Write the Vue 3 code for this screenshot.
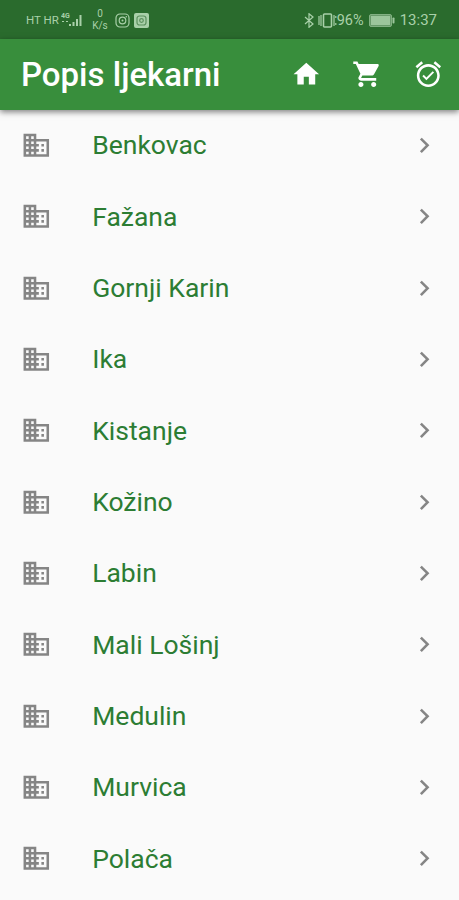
<!-- App.vue - Pharmacy list -->
<template>
  <div class="screen">
    <div class="status-bar">
      <div class="status-left">
        <span class="carrier">HT HR</span>
        <svg class="signal" viewBox="0 0 22 16">
          <text x="0" y="6" class="network">4G</text>
          <path d="M1 9h2v1H1zM5 9h2v1H5zM8 12h2v2H8zM11.5 10h2v4h-2zM15 7h2v7h-2zM18.5 3h2v11h-2z" />
        </svg>
        <div class="speed">
          <span>0</span>
          <span>K/s</span>
        </div>
        <svg class="status-app" viewBox="0 0 15 15">
          <rect x="1" y="1" width="13" height="13" rx="4" class="line" />
          <circle cx="7.5" cy="7.5" r="3.3" class="line" />
          <circle cx="7.5" cy="7.5" r="1" />
          <circle cx="11.3" cy="3.8" r=".8" />
        </svg>
        <svg class="status-app gallery" viewBox="0 0 15 15">
          <rect width="15" height="15" rx="2" />
          <rect x="3" y="3" width="9" height="9" rx="2.5" class="cut" />
          <circle cx="7.5" cy="7.5" r="1.8" class="cut" />
        </svg>
      </div>

      <div class="status-right">
        <svg class="bluetooth" viewBox="0 0 10 15">
          <path d="M1 4l8 7-4 3.3V.7L9 4l-8 7" class="line" />
        </svg>
        <svg class="vibrate" viewBox="0 0 20 15">
          <path d="M2 3v9M4 2v11M17 2v11M18.8 3v2M18.8 10v2" class="line" />
          <rect x="6.5" y="1" width="8" height="13" rx="1" class="line thick" />
        </svg>
        <span class="percent">96%</span>
        <svg class="battery" viewBox="0 0 26 13">
          <rect x=".5" y=".5" width="22" height="12" rx="1.5" class="shell" />
          <rect x="2" y="2" width="19" height="9" />
          <rect x="23.5" y="3.5" width="2" height="6" rx=".8" />
        </svg>
        <span class="clock">13:37</span>
      </div>
    </div>

    <header class="app-bar">
      <h1>Popis ljekarni</h1>
      <button v-for="action in actions" :key="action.name" :aria-label="action.name" class="btn-icon">
        <svg class="icon" viewBox="0 0 24 24"><path :d="action.path" /></svg>
      </button>
    </header>

    <ul class="places">
      <li v-for="place in places" :key="place" class="place">
        <svg class="icon" viewBox="0 0 24 24">
          <path d="M12 7V3H2v18h20V7H12zM6 19H4v-2h2v2zm0-4H4v-2h2v2zm0-4H4V9h2v2zm0-4H4V5h2v2zm4 12H8v-2h2v2zm0-4H8v-2h2v2zm0-4H8V9h2v2zm0-4H8V5h2v2zm10 12h-8v-2h2v-2h-2v-2h2v-2h-2V9h8v10zm-2-8h-2v2h2v-2zm0 4h-2v2h2v-2z" />
        </svg>
        <span class="place-name">{{ place }}</span>
        <svg class="icon" viewBox="0 0 24 24">
          <path d="M10 6L8.59 7.41 13.17 12l-4.58 4.59L10 18l6-6z" />
        </svg>
      </li>
    </ul>
  </div>
</template>

<script setup>
const actions = [
  {
    name: 'Home',
    path: 'M10 20v-6h4v6h5v-8h3L12 3 2 12h3v8z'
  },
  {
    name: 'Cart',
    path: 'M7 18c-1.1 0-1.99.9-1.99 2S5.9 22 7 22s2-.9 2-2-.9-2-2-2zM1 2v2h2l3.6 7.59-1.35 2.45c-.16.28-.25.61-.25.96 0 1.1.9 2 2 2h12v-2H7.42c-.14 0-.25-.11-.25-.25l.03-.12.9-1.63h7.45c.75 0 1.41-.41 1.75-1.03l3.58-6.49c.08-.14.12-.31.12-.48 0-.55-.45-1-1-1H5.21l-.94-2H1zm16 16c-1.1 0-1.99.9-1.99 2s.89 2 1.99 2 2-.9 2-2-.9-2-2-2z'
  },
  {
    name: 'Alarm',
    path: 'M22 5.72l-4.6-3.86-1.29 1.53 4.6 3.86L22 5.72zM7.88 3.39L6.6 1.86 2 5.71l1.29 1.53 4.59-3.85zM12 4c-4.97 0-9 4.03-9 9s4.02 9 9 9c4.97 0 9-4.03 9-9s-4.03-9-9-9zm0 16c-3.87 0-7-3.13-7-7s3.13-7 7-7 7 3.13 7 7-3.13 7-7 7zm-1.46-5.47L8.41 12.4l-1.06 1.06 3.18 3.18 6-6-1.06-1.06-4.93 4.95z'
  }
];

const places = [
  'Benkovac',
  'Fažana',
  'Gornji Karin',
  'Ika',
  'Kistanje',
  'Kožino',
  'Labin',
  'Mali Lošinj',
  'Medulin',
  'Murvica',
  'Polača'
];
</script>

<style>
body {
  background: #fafafa;
}
</style>

<style scoped>
.screen {
  height: 900px;
  overflow: hidden;
  background: #fafafa;
  font-family: Roboto, sans-serif;
}

.status-bar {
  display: flex;
  justify-content: space-between;
  align-items: center;
  box-sizing: border-box;
  height: 38.5px;
  padding: 2px 22px 0 26px;
  background: #2a6b2d;
  color: #a9d0a9;
  fill: #a9d0a9;
  font-size: 14px;
}

.status-left,
.status-right {
  display: flex;
  align-items: center;
}

.line {
  fill: none;
  stroke: #a9d0a9;
  stroke-width: 1.2;
}

.thick {
  stroke-width: 1.6;
}

.cut {
  fill: none;
  stroke: #5c8f5e;
  stroke-width: 1.2;
}

.carrier {
  font-size: 11.5px;
  width: 35px;
  white-space: nowrap;
}

.signal {
  width: 22px;
  height: 16px;
}

.network {
  font-size: 7px;
  font-weight: 700;
}

.speed {
  display: flex;
  flex-direction: column;
  align-items: center;
  width: 18px;
  margin: 0 6px 0 8px;
  font-size: 10px;
  line-height: 12px;
}

.status-app {
  width: 15px;
  height: 15px;
}

.gallery {
  margin-left: 4px;
}

.bluetooth {
  width: 10px;
  height: 15px;
  margin-right: 4px;
}

.vibrate {
  width: 20px;
  height: 15px;
  margin-left: -1px;
}

.percent {
  width: 32px;
  font-size: 14.5px;
}

.battery {
  width: 26px;
  height: 13px;
  opacity: 0.9;
}

.shell {
  fill: #6fa071;
  stroke: #8cb98d;
}

.clock {
  margin-left: 5px;
  font-size: 15px;
}

.app-bar {
  position: relative;
  display: flex;
  align-items: center;
  height: 71px;
  background: #388e3c;
  box-shadow: 0 2px 6px rgba(0, 0, 0, 0.5);
}

h1 {
  flex: 1;
  margin: 0;
  padding-left: 21px;
  color: #fff;
  font-size: 33px;
  font-weight: 500;
  white-space: nowrap;
}

.btn-icon {
  display: flex;
  justify-content: center;
  width: 61.2px;
  padding: 0;
  border: none;
  background: none;
  cursor: pointer;
}

.icon {
  flex: none;
  width: 30.6px;
  height: 30.6px;
  fill: #858585;
}

.btn-icon .icon {
  fill: #fff;
}

.places {
  margin: 0;
  padding: 0;
  list-style: none;
}

.place {
  display: flex;
  align-items: center;
  height: 71.35px;
  padding: 0 19.8px 0 21px;
}

.place-name {
  flex: 1;
  margin-left: 40.6px;
  padding-bottom: 1px;
  color: #2c7d33;
  font-size: 26.5px;
}
</style>
